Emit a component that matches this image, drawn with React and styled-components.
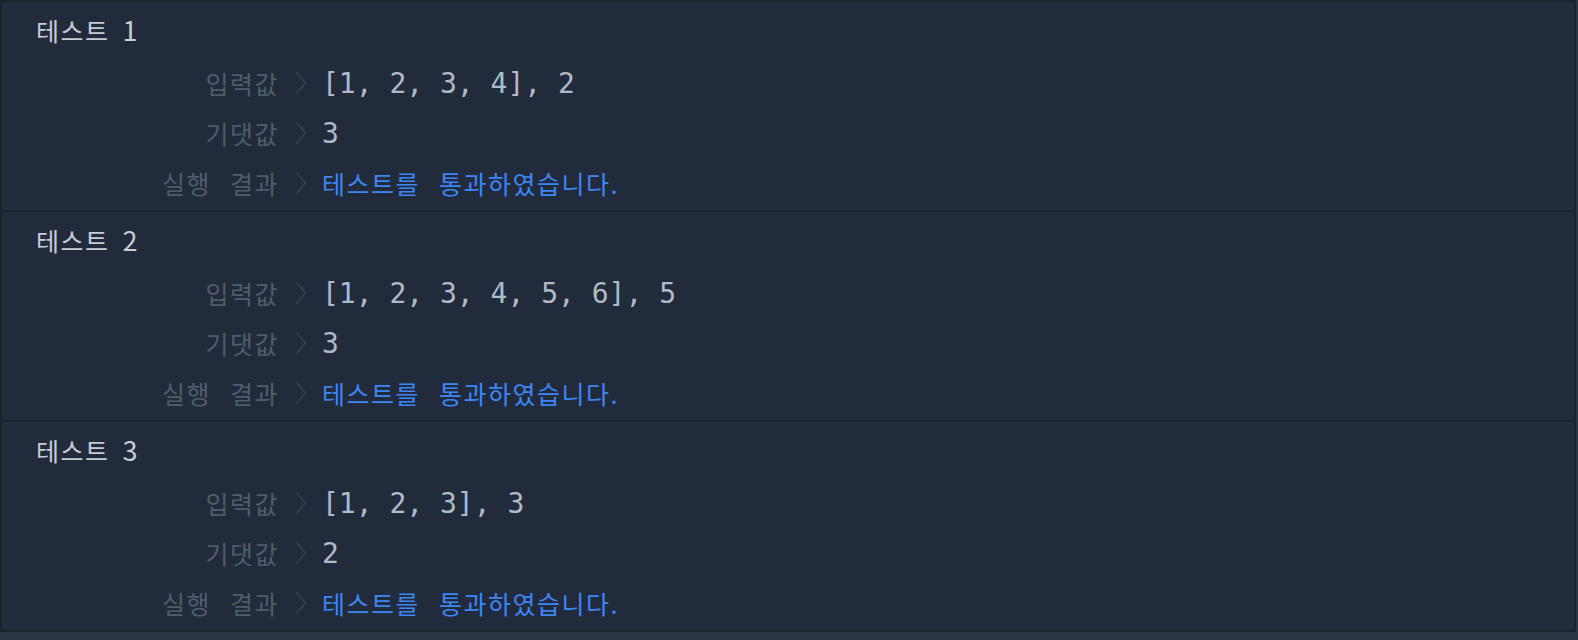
import React from "react";
import styled, { createGlobalStyle } from "styled-components";

const tests = [
  { id: 1, input: "[1, 2, 3, 4], 2", expected: "3" },
  { id: 2, input: "[1, 2, 3, 4, 5, 6], 5", expected: "3" },
  { id: 3, input: "[1, 2, 3], 3", expected: "2" },
];

const GlobalStyle = createGlobalStyle`
  html, body {
    margin: 0;
    background: #2a3646;
  }
  body {
    font-family: "DejaVu Sans Mono", "Noto Sans CJK KR", monospace;
  }
`;

function Chevron() {
  return (
    <svg width="12" height="24" viewBox="0 0 12 24">
      <polyline
        points="1.5,1.5 10.5,12 1.5,22.5"
        fill="none"
        stroke="#364151"
        strokeWidth="1.6"
      />
    </svg>
  );
}

function App() {
  return (
    <>
      <GlobalStyle />
      <Panel>
        {tests.map((t) => (
          <Section key={t.id}>
            <Title>
              테스트 <Num>{t.id}</Num>
            </Title>
            <Row>
              <Label>입력값</Label>
              <Arrow>
                <Chevron />
              </Arrow>
              <Value>{t.input}</Value>
            </Row>
            <Row>
              <Label>기댓값</Label>
              <Arrow>
                <Chevron />
              </Arrow>
              <Value>{t.expected}</Value>
            </Row>
            <Row>
              <Label>실행 결과</Label>
              <Arrow>
                <Chevron />
              </Arrow>
              <Result>테스트를 통과하였습니다.</Result>
            </Row>
          </Section>
        ))}
      </Panel>
    </>
  );
}

export default App;

const Panel = styled.div`
  width: 1576px;
  box-sizing: border-box;
  border: 2px solid #1b2230;
  background: #222b3b;
`;

const Section = styled.div`
  padding: 8px 0 2px 0;
  & + & {
    border-top: 2px solid #1b2230;
  }
`;

const Title = styled.div`
  height: 40px;
  line-height: 40px;
  padding-left: 34px;
  margin-bottom: 8px;
  font-family: "Noto Sans CJK KR", sans-serif;
  font-size: 25px;
  letter-spacing: 1.5px;
  word-spacing: 6px;
  color: #c6cdd7;
  white-space: pre;
`;

const Num = styled.span`
  font-size: 27px;
`;

const Row = styled.div`
  display: grid;
  grid-template-columns: 277px 43px 1fr;
  align-items: center;
  height: 50px;
`;

const Label = styled.div`
  text-align: right;
  font-family: "Noto Sans CJK KR", sans-serif;
  font-size: 25px;
  letter-spacing: 1.5px;
  word-spacing: 12px;
  color: #505c6c;
`;

const Arrow = styled.div`
  display: flex;
  justify-content: center;
  align-items: center;
`;

const Value = styled.div`
  font-size: 28px;
  color: #b0bac6;
  white-space: pre;
`;

const Result = styled.div`
  font-family: "Noto Sans CJK KR", sans-serif;
  font-size: 25px;
  letter-spacing: 1.5px;
  word-spacing: 12px;
  color: #3d86f5;
`;
